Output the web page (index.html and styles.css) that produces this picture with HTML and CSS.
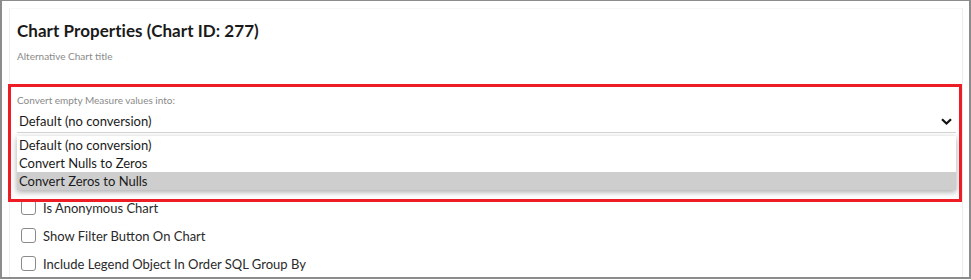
FILE: index.html
```html
<!DOCTYPE html>
<html>
<head>
<meta charset="utf-8">
<link rel="stylesheet" href="styles.css">
</head>
<body>
<div class="frame">
  <div class="card">
    <h1 class="title">Chart Properties (Chart ID: 277)</h1>
    <div class="subtitle">Alternative Chart title</div>
    <div class="field">
      <div class="label">Convert empty Measure values into:</div>
      <div class="select">
        <span class="value">Default (no conversion)</span>
        <svg class="chev" width="11" height="7" viewBox="0 0 11 7"><path d="M1 1.2 L5.5 5.5 L10 1.2" fill="none" stroke="#111" stroke-width="2.2"/></svg>
        <ul class="menu">
          <li>Default (no conversion)</li>
          <li>Convert Nulls to Zeros</li>
          <li class="active">Convert Zeros to Nulls</li>
        </ul>
      </div>
    </div>
    <div class="checks">
      <label class="check"><span class="box"></span>Is Anonymous Chart</label>
      <label class="check"><span class="box"></span>Show Filter Button On Chart</label>
      <label class="check"><span class="box"></span>Include Legend Object In Order SQL Group By</label>
    </div>
  </div>
  <div class="highlight"></div>
</div>
</body>
</html>
```
FILE: styles.css
```css
html, body { margin: 0; padding: 0; background: #fff; }
body { font-family: Lato, "Open Sans", sans-serif; color: #222; }
.frame {
  position: relative;
  width: 971px; height: 279px;
  box-sizing: border-box;
  border: 1px solid #8c8c8c;
  border-left-width: 2px; border-right-width: 2px; border-bottom-width: 2px;
  padding: 7px 6px 0 7px;
  overflow: hidden;
}
.card {
  height: 100%;
  box-sizing: border-box;
  border-left: 1px solid #f0f0f0;
  border-right: 1px solid #ececec;
  border-top: 1px solid #f7f7f7;
  padding: 11px 6px 0 7px;
}
.title { margin: 0; font-size: 17px; font-weight: 700; color: #1a1a1a; line-height: 22px; letter-spacing: 0.05px; }
.subtitle { margin-top: 8px; font-size: 10px; color: #8a8a8a; line-height: 12px; }
.field { margin-top: 32px; }
.label { font-size: 10px; color: #8a8a8a; line-height: 12px; }
.select {
  position: relative;
  margin-top: 4px;
  height: 22px;
  border-bottom: 1px solid #d6d6d6;
  display: flex; align-items: center; justify-content: space-between;
  padding: 0 4px 0 2px;
}
.value { font-size: 13px; color: #1a1a1a; }
.chev { margin-top: 1px; }
.menu {
  position: absolute; left: 0; right: 0; top: 26px;
  margin: 0; padding: 0; list-style: none;
  background: #fff;
  box-shadow: 0 2px 6px rgba(0,0,0,0.35);
  z-index: 2;
}
.menu li { height: 18px; line-height: 18px; font-size: 13px; padding-left: 2px; color: #1a1a1a; }
.menu li.active { background: #cecece; }
.checks { margin-top: 67px; display: flex; flex-direction: column; gap: 13px; }
.check { display: flex; align-items: center; gap: 7px; font-size: 13px; color: #2a2a2a; height: 15px; padding-left: 4px; }
.box { width: 13px; height: 13px; border: 1px solid #8a8a8a; border-radius: 3px; box-sizing: content-box; }
.highlight {
  position: absolute; left: 6px; top: 83px; width: 948px; height: 112px;
  border: 3px solid #ee1c25;
  z-index: 3; pointer-events: none;
}
```
